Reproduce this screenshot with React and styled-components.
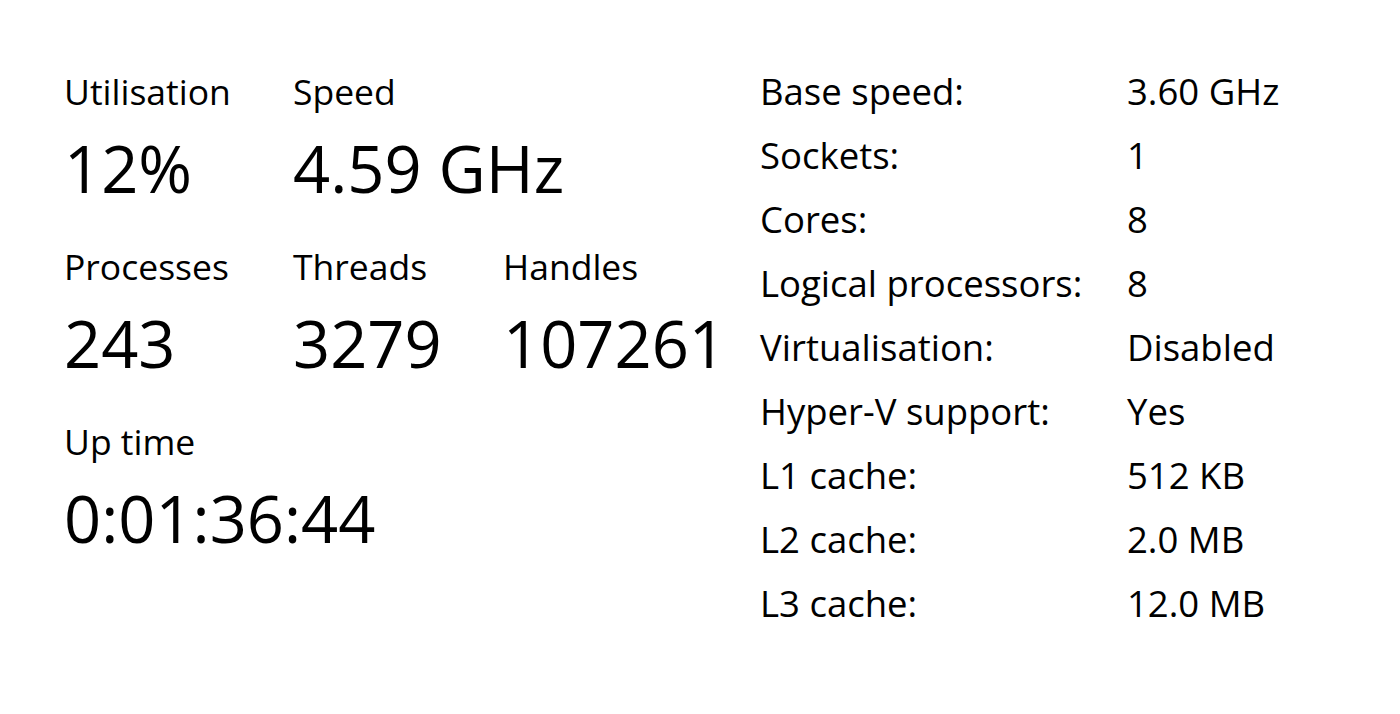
import React from "react";
import styled, { createGlobalStyle } from "styled-components";

const Global = createGlobalStyle`
  body {
    margin: 0;
    background: #ffffff;
    font-family: "Open Sans", "Noto Sans", sans-serif;
    color: #000;
  }
`;

const Page = styled.div`
  display: flex;
  padding: 61px 0 0 64px;
  height: 714px;
  box-sizing: border-box;
`;

const Left = styled.div`
  width: 696px;
  display: flex;
  flex-direction: column;
  gap: 21px;
`;

const StatRow = styled.div`
  display: flex;
`;

const Stat = styled.div`
  width: ${(p) => p.w || 229}px;
  display: flex;
  flex-direction: column;
`;

const Label = styled.div`
  font-size: 35.5px;
  line-height: 60px;
  white-space: nowrap;
`;

const Value = styled.div`
  font-size: 65px;
  line-height: 94px;
  white-space: nowrap;
`;

const Specs = styled.div`
  display: grid;
  grid-template-columns: 367px auto;
  grid-auto-rows: 64px;
  align-items: center;
  margin-top: -2px;
`;

const SpecCell = styled.div`
  font-size: 36.5px;
  white-space: nowrap;
`;

const specs = [
  ["Base speed:", "3.60 GHz"],
  ["Sockets:", "1"],
  ["Cores:", "8"],
  ["Logical processors:", "8"],
  ["Virtualisation:", "Disabled"],
  ["Hyper-V support:", "Yes"],
  ["L1 cache:", "512 KB"],
  ["L2 cache:", "2.0 MB"],
  ["L3 cache:", "12.0 MB"],
];

export default function App() {
  return (
    <>
      <Global />
      <Page>
        <Left>
          <StatRow>
            <Stat>
              <Label>Utilisation</Label>
              <Value>12%</Value>
            </Stat>
            <Stat>
              <Label>Speed</Label>
              <Value>4.59 GHz</Value>
            </Stat>
          </StatRow>
          <StatRow>
            <Stat>
              <Label>Processes</Label>
              <Value>243</Value>
            </Stat>
            <Stat w={210}>
              <Label>Threads</Label>
              <Value>3279</Value>
            </Stat>
            <Stat>
              <Label>Handles</Label>
              <Value>107261</Value>
            </Stat>
          </StatRow>
          <StatRow>
            <Stat>
              <Label>Up time</Label>
              <Value>0:01:36:44</Value>
            </Stat>
          </StatRow>
        </Left>
        <Specs>
          {specs.map(([k, v]) => (
            <React.Fragment key={k}>
              <SpecCell>{k}</SpecCell>
              <SpecCell>{v}</SpecCell>
            </React.Fragment>
          ))}
        </Specs>
      </Page>
    </>
  );
}
